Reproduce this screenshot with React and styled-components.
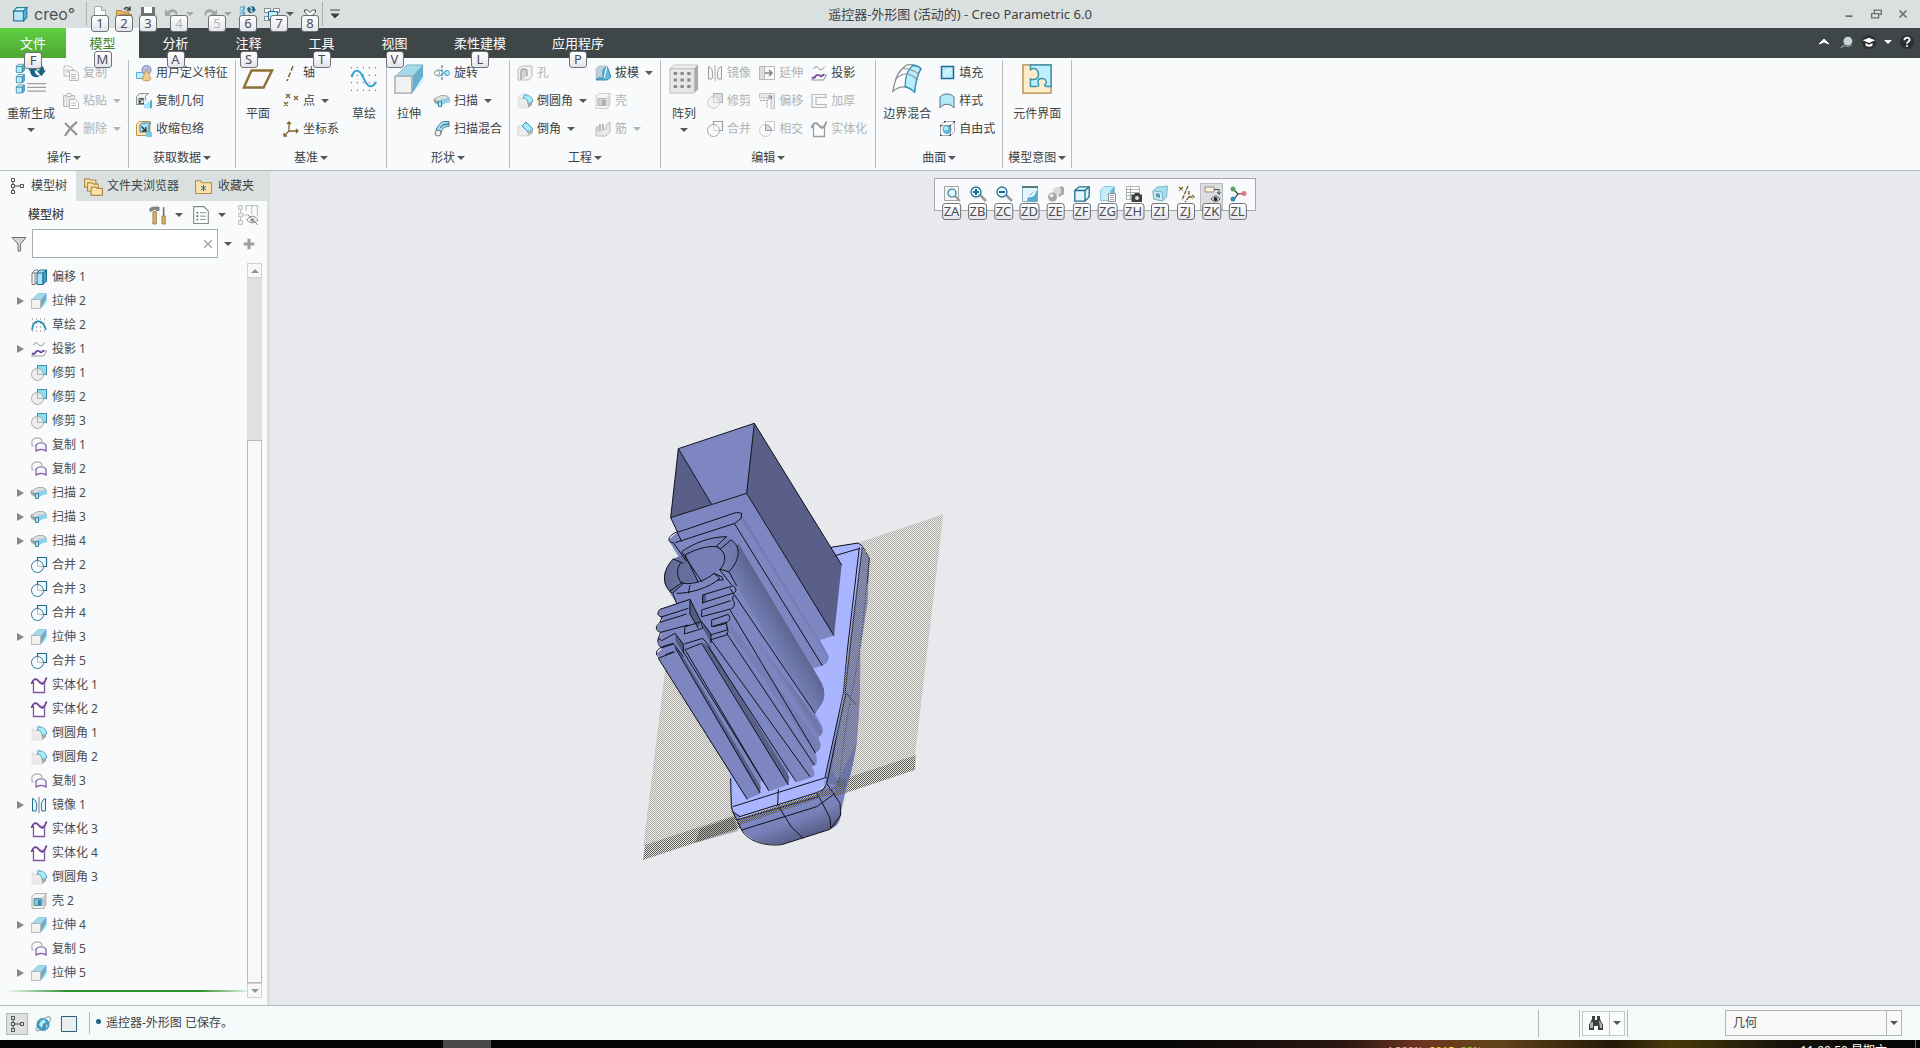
import React from "react";
import styled, { createGlobalStyle } from "styled-components";

const GlobalStyle = createGlobalStyle`
  * {
    box-sizing: border-box;
  }
  body {
    margin: 0;
    overflow: hidden;
    color: #404344;
    font-family: "Noto Sans", "Noto Sans CJK SC", sans-serif;
    font-size: 12px;
    line-height: 16px;
  }
  button, input, select {
    margin: 0;
    padding: 0;
    border: 0;
    background: none;
    color: inherit;
    font: inherit;
  }
`;

const Window = styled.div`
  display: flex;
  flex-direction: column;
  height: 100vh;
  background: #f8fafc;
`;

const Svg = styled.svg`
  display: block;
  flex: none;
  overflow: visible;
  width: ${({ $size }) => $size || 16}px;
  height: ${({ $size }) => $size || 16}px;
`;

const Arrow = styled.span`
  flex: none;
  width: 0;
  height: 0;
  border: 4px solid transparent;
  border-top-color: ${({ $color }) => $color || "#555859"};
  border-bottom: 0;
`;

const KeyTip = styled.span`
  position: absolute;
  z-index: 5;
  left: 50%;
  bottom: ${({ $drop }) => $drop || -6}px;
  transform: translateX(-50%);
  min-width: 18px;
  height: 17px;
  padding: 0 1px;
  border: 1px solid #6f7273;
  border-radius: 3px;
  background: linear-gradient(#ffffff, #e4e4ee);
  color: ${({ $off }) => ($off ? "#b4b4b8" : "#4c4c50")};
  font-size: 13px;
  line-height: 15px;
  text-align: center;
`;

/* title bar */

const TitleBar = styled.header`
  display: grid;
  grid-template-columns: 1fr auto 1fr;
  align-items: center;
  height: 28px;
  background: #dae0df;
`;

const Quick = styled.div`
  display: flex;
  align-items: center;
  height: 28px;
`;

const Brand = styled.div`
  display: flex;
  align-items: center;
  gap: 6px;
  width: 87px;
  height: 24px;
  margin-right: 1px;
  padding-left: 12px;
  border-right: 1px solid #aab2b2;
  color: #4a5051;
  font-family: Inter, sans-serif;
  font-size: 16px;
`;

const QuickButton = styled.button`
  position: relative;
  display: flex;
  align-items: center;
  justify-content: center;
  gap: 6px;
  width: ${({ $wide }) => ($wide ? 38 : 24)}px;
  height: 24px;
`;

const Customize = styled(QuickButton)`
  border-left: 1px solid #aab2b2;
`;

const Title = styled.h1`
  margin: 0;
  font-size: 13px;
  font-weight: 400;
  line-height: 20px;
`;

const WindowButtons = styled.div`
  display: flex;
  justify-content: flex-end;
  padding-right: 4px;
  color: #6b6f70;
`;

const WindowButton = styled.button`
  display: flex;
  justify-content: center;
  width: 27px;
`;

/* tabs */

const TabBar = styled.nav`
  display: flex;
  height: 30px;
  background: #3e4647;
  color: #fff;
`;

const Tab = styled.button`
  position: relative;
  min-width: 73px;
  padding: 0 23px;
  font-size: 13px;
  ${({ $active }) => $active && "background: #f8fafc; color: #41852f;"}
`;

const FileTab = styled(Tab)`
  min-width: 66px;
  padding: 0 20px;
  background: linear-gradient(#5fd03f, #4fa536);
`;

const TabTools = styled.div`
  display: flex;
  align-items: center;
  gap: 8px;
  margin-left: auto;
  padding: 0 6px 3px 0;
`;

const TabTool = styled.button`
  display: flex;
`;

/* ribbon */

const Ribbon = styled.section`
  display: flex;
  height: 113px;
  padding: 2px 0;
  border-bottom: 1px solid #b3bbbb;
`;

const Group = styled.div`
  display: flex;
  flex-direction: column;
  align-items: center;
  padding: 0 ${({ $pad }) => $pad || 7}px;
  border-right: 1px solid #b8bebf;
`;

const GroupBody = styled.div`
  display: flex;
  gap: ${({ $gap }) => $gap || 8}px;
  height: 89px;
`;

const GroupLabel = styled.button`
  display: flex;
  align-items: center;
  gap: 2px;
  height: 18px;
  white-space: nowrap;
`;

const BigButton = styled.button`
  display: flex;
  flex-direction: column;
  align-items: center;
  min-width: 30px;
  padding-top: 4px;
  white-space: nowrap;
  span:first-of-type {
    margin: 12px 0 6px;
  }
`;

const Column = styled.div`
  display: flex;
  flex-direction: column;
`;

const SmallButton = styled.button`
  display: flex;
  align-items: center;
  height: 28px;
  padding-bottom: 3px;
  white-space: nowrap;
  color: ${({ disabled }) => (disabled ? "#b1b4b5" : "inherit")};
  svg {
    margin-right: 4px;
    ${({ disabled }) => disabled && "filter: grayscale(1); opacity: 0.6;"}
  }
  ${Arrow} {
    margin-left: 6px;
  }
`;

/* work area */

const Work = styled.main`
  display: flex;
  flex: 1;
  min-height: 0;
`;

const Side = styled.aside`
  display: flex;
  flex-direction: column;
  width: 270px;
  border-right: 3px solid #dae0df;
`;

const SideTabs = styled.div`
  display: flex;
  height: 30px;
  margin-right: -3px;
  background: #dae0df;
`;

const SideTab = styled.button`
  display: flex;
  align-items: center;
  gap: ${({ $gap }) => $gap || 6}px;
  padding: 0 ${({ $pad }) => $pad || 8}px;
  white-space: nowrap;
  ${({ $active }) => $active && "background: #f8fafc;"}
`;

const TreeHead = styled.div`
  display: flex;
  align-items: center;
  height: 28px;
  padding: 0 9px 0 28px;
  h2 {
    flex: 1;
    margin: 0;
    font-size: 12px;
    font-weight: 500;
  }
`;

const HeadButton = styled.button`
  display: flex;
  align-items: center;
  gap: 8px;
  margin-left: 9px;
  &:last-child {
    margin-left: 12px;
  }
`;

const Filter = styled.div`
  display: flex;
  align-items: center;
  padding: 0 11px;
  gap: 6px;
  > svg {
    margin-right: -1px;
  }
`;

const SearchBox = styled.div`
  display: flex;
  flex: 1;
  align-items: center;
  min-width: 0;
  height: 29px;
  padding-right: 3px;
  border: 1px solid #a3b0b3;
  background: #fff;
  input {
    flex: 1;
    width: 0;
    min-width: 0;
    height: 100%;
    padding-left: 6px;
    outline: 0;
  }
`;

const PlainButton = styled.button`
  display: flex;
  align-items: center;
`;

const AddButton = styled(PlainButton)`
  margin-left: 4px;
`;

const TreeArea = styled.div`
  display: flex;
  flex: 1;
  min-height: 0;
  margin: 5px 5px 7px 8px;
`;

const TreePane = styled.div`
  flex: 1;
  overflow: hidden;
  padding-top: 2px;
`;

const Tree = styled.ul`
  margin: 0 0 5px;
  padding: 0;
  list-style: none;
`;

const TreeItem = styled.li`
  display: flex;
  align-items: center;
  height: 24px;
  padding-left: 9px;
  color: #4b4d4f;
  svg {
    margin-right: 5px;
  }
`;

const Twist = styled.button`
  width: 7px;
  height: 8px;
  margin-right: 7px;
  border: 4px solid transparent;
  border-left: 7px solid ${({ $open }) => ($open ? "#858788" : "transparent")};
  border-right: 0;
`;

const InsertLine = styled.div`
  height: 2px;
  background: linear-gradient(90deg, #eef5ee, #2c8f2c 25%, #2c8f2c 80%, #dff0df);
`;

const ScrollBar = styled.div`
  display: flex;
  flex-direction: column;
  width: 15px;
  background: #dfe0e2;
`;

const ScrollButton = styled.button`
  display: flex;
  align-items: center;
  justify-content: center;
  height: 15px;
  border: 1px solid #cfd1d3;
  background: #f8f8f9;
  ${Arrow} {
    border-top-color: #929495;
    transform: ${({ $up }) => ($up ? "rotate(180deg)" : "none")};
  }
`;

const Track = styled.div`
  display: flex;
  flex: 1;
  flex-direction: column;
  justify-content: flex-end;
`;

const Thumb = styled.div`
  height: 77%;
  border: 1px solid #b9bbbd;
  background: #f8f8f9;
`;

const Canvas = styled.section`
  position: relative;
  flex: 1;
  background: #e8e9ed;
`;

const Scene = styled.svg`
  display: block;
  width: 100%;
  height: 100%;
`;

const ViewBar = styled.div`
  position: absolute;
  top: 7px;
  left: 50%;
  transform: translateX(-50%);
  display: flex;
  height: 33px;
  padding: 0 4px;
  border: 1px solid #a5a8aa;
  background: #f8fafc;
`;

const ViewButton = styled.button`
  position: relative;
  display: flex;
  align-items: flex-start;
  justify-content: center;
  width: 23px;
  height: 27px;
  margin: 4px 2px 0 1px;
  padding-top: 3px;
  outline: ${({ $on }) => ($on ? "1px solid #bdbec0" : "0")};
  outline-offset: -1px;
  background: ${({ $on }) => ($on ? "#dcdde0" : "none")};
`;

/* bottom */

const Status = styled.footer`
  display: flex;
  align-items: center;
  height: 35px;
  padding-left: 2px;
  border-top: 1px solid #b3bbbb;
  background: #f5f9fa;
`;

const StatusButton = styled.button`
  display: flex;
  align-items: center;
  justify-content: center;
  width: 22px;
  height: 22px;
  margin: 2px 0 0 4px;
  border: 1px solid ${({ $on }) => ($on ? "#b4b6b8" : "transparent")};
  background: ${({ $on }) => ($on ? "#dfe0e2" : "none")};
`;

const Message = styled.p`
  flex: 1;
  margin: 0 0 0 9px;
  padding-left: 6px;
  border-left: 1px solid #b3b8b9;
  line-height: 22px;
  &::before {
    content: "";
    display: inline-block;
    width: 5px;
    height: 5px;
    margin-right: 5px;
    border-radius: 50%;
    background: #1b6283;
    vertical-align: 3px;
  }
`;

const StatusCell = styled.div`
  display: flex;
  align-items: center;
  height: 27px;
  padding: 0 2px;
  border-left: 1px solid #b3b8b9;
  ${({ $empty }) => $empty && "width: 41px;"}
`;

const FindButton = styled.button`
  display: flex;
  align-items: center;
  justify-content: center;
  width: ${({ $narrow }) => ($narrow ? 16 : 28)}px;
  height: 25px;
  margin-left: ${({ $narrow }) => ($narrow ? -1 : 0)}px;
  border: 1px solid #c3c8ca;
  background: #fafbfc;
`;

const SelectWrap = styled.label`
  display: flex;
  align-items: center;
  width: 177px;
  height: 26px;
  margin: 0 18px 0 93px;
  border: 1px solid #b0b4b5;
  background: #f8f8f8;
  select {
    flex: 1;
    height: 24px;
    padding-left: 7px;
    border-right: 1px solid #b0b4b5;
    outline: 0;
    appearance: none;
  }
  ${Arrow} {
    margin: 0 3px;
  }
`;

const TaskBar = styled.div`
  display: flex;
  height: 8px;
  overflow: hidden;
  background: linear-gradient(90deg, #050505 60%, #2a1712 70%, #6d3520 74%, #63441a 78%, #221808 84%, #4a3a0a 87%, #14120a 93%, #050505);
  color: #fff;
  font-size: 12px;
  line-height: 16px;
`;

const TaskSlot = styled.span`
  width: 48px;
  margin-left: 443px;
  background: #48494a;
`;

const Meters = styled.div`
  display: flex;
  flex: 1;
  gap: 6px;
  padding: 3px 0 0 895px;
  font-size: 11px;
`;

const Meter = styled.span`
  color: ${({ $color }) => $color};
`;

const Clock = styled.time`
  padding-top: 3px;
  margin-right: 28px;
`;

const ShowDesktop = styled.span`
  width: 5px;
  border-left: 1px solid #666;
`;

/* icons, drawn on a 16 unit grid */

const B = "#1f6e92";
const G = "#8d9091";

const cube = (x, y, s) => (
  <g transform={`translate(${x} ${y}) scale(${s})`} stroke="#287fa2" strokeWidth={1.1}>
    <path d="M1 4h9v9H1z" fill="#b8e9fb" />
    <path d="M1 4l3-3h9l-3 3z" fill="#e4f7fe" />
    <path d="M10 4l3-3v9l-3 3z" fill="#5eb2d3" />
  </g>
);

const extrude = (
  <>
    <path d="M.5 7L7 .5h8.5L10 6.5z" fill="#a4d9ec" stroke="#78aec3" strokeWidth=".5" />
    <path d="M10 6.5L15.500.5v9L9.500 15.5z" fill="#66b0cf" />
    <path d="M10 15.500l5.500-6v-3z" fill="#d9f2fa" />
    <path d="M.5 6.500h9v9h-9z" fill="#f1f1f0" stroke="#a2a5a6" strokeWidth=".7" />
  </>
);

const tree = (
  <g fill="none" stroke="#4c4f50">
    <path d="M2.500.5h3v3h-3zM2.500 6.500h3v3h-3zM2.500 12.500h3v3h-3zM11.500 6.500h3v3h-3zM4 3.500v3M4 9.500v3M5.500 8h6" />
  </g>
);

const regen = (
  <>
    {cube(-0.2, -0.2, 0.36)}
    {cube(-0.2, 5.3, 0.36)}
    {cube(-0.2, 10.8, 0.36)}
    <path d="M6 10.500h10M6 12.500h10M6 14.500h10" stroke="#9b9d9e" strokeWidth=".7" />
    <path d="M6.500 3.500L9 .5l2.500 3H10c0 2 1.500 3 3 2.500-2 2-5.500 1-5.500-2.500zM16 3.500l-2.500 3-2.500-3h1.500c0-2-1-2.500-2.500-2.500 2-1.500 5-.5 5 2.500z" fill="#1c6485" />
  </>
);

const icons = {
  cube: cube(0.5, 0.5, 1.1),
  regen,
  extrude,
  tree,
  new: <><path d="M2.500.5h7l4 4v11h-11z" fill="#fff" stroke="#a3a6a7" /><path d="M9.500.5v4h4" fill="#e6e6e6" stroke="#a3a6a7" /></>,
  open: <><path d="M.5 14V4.500h5l1 1.500H13v3" fill="#e6b56b" stroke="#b98538" /><path d="M1 14.500L3.500 8.500H16l-3 6z" fill="#ffe1a8" stroke="#b98538" /><path d="M8 3.500c2-3 4-2 5-.5M14 .5V4h-3.500" fill="none" stroke="#444" strokeWidth="1.500" /></>,
  save: <><path d="M1 1h14v14H1z" fill="#707476" /><path d="M4 1h8v6H4z" fill="#fff" /><path d="M4 10h8v5H4z" fill="#ccc" /></>,
  undo: <path d="M1 3v7h7L5.500 7.500C8 5 13 6 12 12c4-6-1-12-9-6.500z" fill="#a2a7a7" />,
  redo: <path d="M15 3v7H8l2.500-2.500C8 5 3 6 4 12c-4-6 1-12 9-6.500z" fill="#a2a7a7" />,
  windows: <g stroke="#858889"><path d="M.5 2.500h6v4h-6zM9.500 2.500h6v4h-6zM.5 10.500h6v4h-6z" fill="#fff" /><path d="M4.500 5.500h9v8h-9z" fill="#c5effc" stroke={B} /></g>,
  close: <path d="M2.500 4h3L8 6.500 10.500 4h3v2L11 8.500l2.500 2.500v2h-3L8 10.500 5.500 13h-3v-2L5 8.500 2.500 6z" fill="#fff" stroke="#4c4f50" />,
  custom: <path d="M3 4h10M4 8h8l-4 4z" fill="#444" stroke="#444" />,
  min: <path d="M4 10.500h8" stroke="currentColor" strokeWidth="2" />,
  restore: <path d="M6 7V3.500h8v5h-3M3 7.500h8v5H3z" fill="none" stroke="currentColor" strokeWidth="1.500" />,
  x: <path d="M4 4l8 8M12 4l-8 8" stroke="currentColor" strokeWidth="2" />,
  up: <path d="M3 10l5-5 5 5-5-2z" fill="#fff" stroke="#fff" />,
  search: <><circle cx="9" cy="7" r="5" fill="#ccd5d5" /><path d="M5 11l-4 4" stroke="#9aa5a5" strokeWidth="1.500" /><path d="M4 12.500c3 1 7 1 10-1" fill="none" stroke="#999" /></>,
  cap: <><circle cx="8" cy="8" r="8" fill="#2d2f30" /><path d="M1 6l7-3 7 3-7 3zM4 9v3c3 2 6 2 8 0V9L8 11z" fill="#fff" /></>,
  help: <><circle cx="8" cy="8" r="8" fill="#2d2f30" /><path d="M5 6c0-4 7-4 6 0-1 2-3 1.500-3 4M8 11.500v2" fill="none" stroke="#fff" strokeWidth="2" /></>,
  copy: <g fill="#f5f5f5" stroke={G}><path d="M1 1h6l3 3v7H1z" /><path d="M6.500 5.500h6l3 3v7h-9z" /><path d="M8 9.500h5M8 11.500h5M8 13.500h5M3 5h3M3 7h3" /></g>,
  paste: <g stroke={G}><path d="M.5 2.500h11v11H.5z" fill="#d4d4d4" /><path d="M4 .5h4v3H4z" fill="#fff" /><path d="M6.500 6.500h6l3 3v6h-9zM8 10h5M8 12.500h5" fill="#fff" /></g>,
  delete: <path d="M2 2l12 12M14 1C10 4 5 10 2 15" fill="none" stroke="#555" strokeWidth="2.200" />,
  udf: <><path d="M.5 7.500h10v6H.5z" fill="#bdeeff" stroke="#5db1d0" /><circle cx="10.500" cy="5" r="4.500" fill="#b4bde8" stroke="#7882bb" /><path d="M10.500 4.500L6 14c2 2.500 7 2.500 9 0z" fill="#f2cd8f" stroke="#ba8d43" strokeWidth=".8" /></>,
  copyGeo: <><path d="M.5 3.500L3.500.5h9L9.500 3.500v8H.5z" fill="#eee" stroke={G} /><path d="M2.500 5h5.500v6H2.500z" fill="#505558" /><path d="M3.500 6l3 3M7 6.500V9.500H4.500" fill="none" stroke="#fff" /><path d="M8 8.500h7.500v7H8z" fill="#a8e7fb" /><path d="M8 11V8.500l3-2.500H16v2.500H11V11z" fill="#e2f8ff" /><path d="M14 8.500l2-2v8l-2 1z" fill="#46add2" /></>,
  shrink: <><path d="M.5 3.500L3 .5h11v14H.5z" fill="#ffe2ad" stroke="#c0964f" /><path d="M4 4l2-2h9l-2 2v7H4z" fill="#9ee0f5" stroke={B} strokeWidth=".8" /><path d="M5.500 5.500l4 4M10 6v4H6" fill="none" stroke="#333" strokeWidth="1.300" /><path d="M10 11h6v5h-6z" fill="#77c8e4" /></>,
  plane: <path d="M4.500 3.500h11L11 12.500H.5z" fill="#fbfaf8" stroke="#8f6f36" strokeWidth="1.300" />,
  axis: <path d="M10 1L4 16" stroke="#82642c" strokeWidth="1.500" strokeDasharray="5 2" />,
  points: <path d="M3 1l4 4M7 1L3 5M11 3l4 4M15 3l-4 4M1 9l4 4M5 9l-4 4" stroke="#82642c" strokeWidth="1.400" />,
  csys: <path d="M6 1v9h9M6 10l-5 5M4 3l2-2 2 2M13 8l2 2-2 2M1 12v3h3" fill="none" stroke="#82642c" strokeWidth="1.300" />,
  sketch: <><path d="M1 2h14M1 6h14M1 10h14M1 14h14" stroke="#555" strokeWidth=".6" strokeDasharray=".6 2.600" /><path d="M1.500 7c1-4.500 4-4.500 6 0s4 7 7 2.500" fill="none" stroke="#36a7d6" strokeWidth="1.100" /></>,
  revolve: <><path d="M8 0v16" stroke="#555" strokeDasharray="3 1" /><circle cx="3" cy="8" r="2.500" fill="#fff" stroke={G} /><circle cx="13" cy="8" r="2.500" fill="#bceafa" stroke="#36a7d6" /><path d="M3 5.500c4-3 7 5 10 5M3 10.500c4 3 7-5 10-5" fill="none" stroke="#36a7d6" /></>,
  sweep: <><path d="M0 6l7-3.500h5L15.500 5 11 6.500 7 7l-2 2-5-1z" fill="#dcdfe0" stroke={G} strokeWidth=".7" /><path d="M0 6v3.500l4 2.500V8z" fill="#9da3a3" /><path d="M5 8.500C8 6 11 6.500 16 5.500v4c-4 0-6 1-8 3z" fill="#8fd2ea" /><path d="M4.500 8.500h3v5h-3z" fill="#a0e5fb" stroke={B} strokeWidth=".8" /></>,
  sweepBlend: <><path d="M2 9C4 4 7 1 10 .5h5v5c-6 0-7 3-8 7z" fill="#9fdcf1" stroke="#4b8299" /><path d="M6 7c2-3 5-4 9-4" fill="none" stroke="#315e70" /><circle cx="4" cy="12" r="3" fill="#eee" stroke="#777" /></>,
  hole: <><path d="M1 4l4-3h10v10l-3 4H1z" fill="#eee" stroke={G} /><path d="M4 15V7c0-4 6-4 6 0v4" fill="#bbb" stroke="#777" strokeWidth="1.500" /></>,
  round: <><path d="M1 5h5c4 0 5 4 5 6v4H1z" fill="#ececec" stroke="#d0d0d0" strokeWidth=".5" /><path d="M1 5l4-4h4L7 5z" fill="#fff" stroke="#bbb" strokeWidth=".5" /><path d="M7 2h3c4 1 6 4 5.500 7L11 11c0-4-2-6-5-6z" fill="#a8e9fc" stroke="#3b95b8" strokeWidth=".8" /><path d="M11 11l4-3v4l-4 3z" fill="#a5a9aa" /></>,
  chamfer: <><path d="M1 5h4l6 6v4H1z" fill="#ececec" stroke="#bbb" strokeWidth=".5" /><path d="M5 5l4-4 7 7-5 3z" fill="#a8e9fc" stroke="#2e94b8" /><path d="M11 11l5-3v4l-5 3z" fill="#b5b9ba" /></>,
  draft: <><path d="M1 4l3-3h7L9 4v10H1z" fill="#b5d3df" stroke="#97acb4" strokeWidth=".6" /><path d="M8 13V5l4-4 4 11-4 3H1l2-2z" fill="#64bddc" stroke={B} strokeWidth=".8" /><path d="M12 1l-3 12" stroke="#fff" /></>,
  shell: <><path d="M1 3.500L4 .5h11.500L13 3.500v12H1z" fill="#f3f3f3" stroke={G} strokeWidth=".7" /><path d="M13 4l2.500-3v11L13 15z" fill="#bcc1c2" /><path d="M3 5.500h8v7H3z" fill="#83c1da" stroke="#558da4" /><path d="M7 7h3v5H7z" fill="#378bb0" /></>,
  rib: <><path d="M1 15V7l2-2v5l8-2V4l4-3v10l-4 4z" fill="#ddd" stroke={G} /><path d="M5 3v6M8 3v5" stroke={G} strokeWidth="2" /></>,
  pattern: <><path d="M.5 2.500l2-2h13l-2 2z" fill="#eee" stroke="#c2c2c2" strokeWidth=".5" /><path d="M13.500 2.500l2-2v13l-2 2z" fill="#aaa" /><path d="M.5 2.500h13v13H.5z" fill="#e6e6e6" stroke="#bdbdbd" strokeWidth=".5" />{[4, 7.5, 11].map((y) => <path key={y} d={`M2.500 ${y + 1}h9`} stroke="#8a8a8a" strokeWidth="1.600" strokeDasharray="1.800 1.800" />)}</>,
  mirror: <><path d="M1.500 1.500c4 1 5 7 3.500 12.500H1.500zM14.500 1.500c-4 1-5 7-3.500 12.500h3.500z" fill="#e6f8fd" stroke={B} /><path d="M8 0v16" stroke="#777" /></>,
  trim: <><path d="M6.500.5h9v9h-9z" fill="#8fdcf7" stroke={B} strokeWidth=".8" /><circle cx="6.500" cy="9.500" r="6" fill="#ececec" fillOpacity=".9" stroke="#a7a9aa" /><path d="M6.500 4v5.500H12" fill="none" stroke="#9eb6bf" /></>,
  merge: <><path d="M6.500 4V.5h9v9H12" fill="none" stroke={B} strokeWidth="1.200" /><circle cx="6.500" cy="9.500" r="6" fill="#fafcfd" stroke="#2d7898" /><path d="M6.500 4v5.500H12" fill="none" stroke="#a1bfca" /></>,
  intersect: <><path d="M6.500.5h9v9h-9z" fill="#fff" stroke="#aaa" /><circle cx="6.500" cy="9.500" r="6" fill="none" stroke="#aaa" /><path d="M6.500 4c3 0 6 3 6 5.500h-6z" fill="#ccc" stroke="#555" /></>,
  extend: <><path d="M.5 1.500h5v13h-5z" fill="#ccc" /><path d="M.5 1.500h15v13H.5zM5.500 1.500v13" fill="none" stroke={G} /><path d="M6 8h7M10 5l3 3-3 3" fill="none" stroke="#333" strokeWidth="1.500" /></>,
  offset: <><path d="M.5.5h15v15H12V5H.5z" fill="#ddd" stroke={G} strokeWidth=".8" /><path d="M1 7.500h7v8" fill="none" stroke="#555" strokeDasharray="2 1" /><path d="M8 7.500l4-4M9 3h3.500v3.500" fill="none" stroke="#333" /></>,
  thicken: <path d="M1 1.500h14v3H5v7h10v3H1z" fill="#f5f5f5" stroke={G} strokeWidth="1.200" />,
  solidify: <><path d="M2.500 5v10.500h11V4" fill="#fff" stroke="#7a549c" strokeWidth="1.300" /><path d="M7 4h7l-2 4-3-1z" fill="#cbbde0" /><path d="M.5 7c1-4 4-7 7-3s5 5 8-3.500" fill="none" stroke="#6d4196" strokeWidth="1.800" /></>,
  project: <><path d="M3 4c1-4 4-2 5 0s4 0 6-2.500" fill="none" stroke="#87898a" /><path d="M.5 15l4-5h11l-3 5z" fill="#fff" stroke={G} /><path d="M1 12c2 2 3 1 4-1s3-1 4 0 3 0 4-2" fill="none" stroke="#6b36a2" strokeWidth="1.500" /></>,
  boundary: <><path d="M.5 14.500C2 6 4 3 8 .5c3-.5 6 .5 7.500 2-2 3-3 8-3.500 12.500-3-3-7-4-11.500-.5z" fill="#fff" stroke={G} strokeWidth=".7" /><path d="M11 .8c2 0 3.500.7 4.500 1.700-2 3-3 8-3.500 12.500-1.500-1.500-3-2.500-5-3C7 7 8 3 11 .8z" fill="#b8edfd" stroke="#3292b7" strokeWidth=".7" /><path d="M2 8c4-4 8-3 11 0M6 2.500c3 0 6 1 8.500 3" fill="none" stroke={G} strokeWidth=".6" /></>,
  fill: <><path d="M2.500 1.500h12v12h-12z" fill="#b2ebfc" stroke={B} strokeWidth="1.500" /><path d="M4 10l6-7M5 12l8-9M9 12l4-5" stroke="#fff" /></>,
  style: <path d="M1 4c3-4 11-4 14 0v11c-3-5-11-5-14 0z" fill="#b5e9fa" stroke="#527482" />,
  freestyle: <><circle cx="8" cy="8.500" r="4.500" fill="#5ab7db" /><circle cx="7" cy="7.500" r="2.200" fill="#aee3f6" /><path d="M1.500 4.500h10v10h-10zM1.500 4.500l4-4h10v10l-4 4M11.500 4.500l4-4" fill="none" stroke="#777" strokeWidth=".6" /><path d="M1 4h1.500v1.500H1zM10.500 4H12v1.500h-1.500zM1 13.500h1.500V15H1zM10.500 13.500H12V15h-1.500zM14.500 0H16v1.500h-1.500zM5 0h1.500v1.500H5z" fill="#333" /></>,
  component: <><path d="M.5.5h15v15H.5z" fill="#ffedca" stroke="#b28544" strokeWidth=".7" /><path d="M4.500.5h11V12h-2.500c-2-.5-.5-1 0-2 0-3-5-3-4.500 0 .5 1 1 2-1 2h-3V8c3 1 5-.5 4-4-1-2-2.500-2-4-1z" fill="#bfeffd" stroke="#3a93b2" strokeWidth=".8" /></>,
  offsetTree: <><path d="M1 4l3-3h3v11l-3 3.500H1zM4 4v11M1 4h5" fill="none" stroke="#777" /><path d="M6 4h6v11.500H6zM6 4l3-3h6.500l-3.500 3" fill="#a9e2f6" stroke={B} /><path d="M12 4l3.500-3v11L12 15.500z" fill="#3ba0c6" stroke={B} /></>,
  sketchTree: <><path d="M1 2h15M1 6h15M1 10h15M1 14h15" stroke="#777" strokeDasharray="1 3" /><path d="M1 13C2 3 11 0 15 13" fill="none" stroke="#2488b2" strokeWidth="1.600" /></>,
  copyTree: <><path d="M3 9H1V4c2-4 8-4 10-.5V5" fill="none" stroke="#b0b2b3" strokeWidth="1.200" /><path d="M5 14V8c2-3 8-3 10 0v6c-3-2-7-2-10 0z" fill="#f8f7fb" stroke="#7a549c" strokeWidth="1.200" /></>,
  folders: <g fill="#fde1ad" stroke="#b48d4a"><path d="M.5 1.500h4l1 1H10v6H.5z" /><path d="M3 5h4l1 1h4v6H3z" /><path d="M6 8.500h4l1 1h4.500v6H6z" /></g>,
  favorite: <><path d="M.5 2.500h5l1 2h9v10H.5z" fill="#fde1ad" stroke="#b48d4a" /><path d="M8 6.500v6M5.500 7.500l5 4M10.500 7.500l-5 4" stroke={B} strokeWidth=".9" /></>,
  tools: <><path d="M.5 2.500C3 0 7 1 9 1v3H7L5 3 1 5z" fill="#85898a" stroke="#666" strokeWidth=".5" /><path d="M3.500 5h3v11h-3z" fill="#deb36a" stroke="#92703a" strokeWidth=".7" /><path d="M13 1v8" stroke="#777" strokeWidth="1.500" /><path d="M11.500 9h3v7h-3z" fill="#deb36a" stroke="#92703a" strokeWidth=".7" /></>,
  list: <><path d="M1.500.5h9l4 4v11h-13z" fill="#fff" stroke="#858889" /><path d="M4 6h1.500M4 9h1.500M4 12h1.500" stroke={B} strokeWidth="1.500" /><path d="M7 6h5.500M7 9h5.500M7 12h5.500" stroke="#888" strokeWidth=".8" /></>,
  hideTree: <g fill="none" stroke="#b9bbbc" strokeWidth=".8"><path d="M.5.5h3v3h-3zM.5 6.500h3v3h-3zM.5 12.500h3v3h-3zM2 3.500v3M2 9.500v3M3.500 8h5M6 .5h10M6.500.5v4M11 .5v7M15.500.5v8" /><path d="M7 12c3-4 6-4 9 0-3 3-6 3-9 0zM8 8l8 8" stroke="#858889" /><circle cx="11.500" cy="12" r="1.500" fill="#858889" /></g>,
  funnel: <path d="M1 1.500h14L9.500 8v7H7V8z" fill="#d5d7d8" stroke="#6c6f70" />,
  clear: <path d="M3 3l10 10M13 3L3 13" stroke="#a0a2a3" strokeWidth="1.800" />,
  plus: <path d="M8 2v12M2 8h12" stroke="#9b9d9e" strokeWidth="3.500" />,
  globe: <><circle cx="8" cy="8.500" r="6.500" fill="#359cc5" /><path d="M5 5l4-2 2 3-3 2-1 4-3-3zM11 8l2 1-2 4z" fill="#bdeafa" /><path d="M2 15C-2 13 9-1 15 1c3 3-6 13-13 14z" fill="none" stroke="#707879" strokeWidth=".8" /></>,
  square: <path d="M.5.5h15v15H.5z" fill="#e9eef1" stroke="#29647e" />,
  binoculars: <><path d="M4 1h3v4h2V1h3v3l3 6v5h-5v-4H6v4H1v-5l3-6z" fill="#3d4041" /><path d="M3 7h2v6H2v-3zM11 6h1l2 4v3h-2z" fill="#aeb1b2" /></>,
  zoomFit: <><path d="M.5.500h14v14H.5z" fill="#f3f4f4" stroke={G} strokeWidth=".8" /><path d="M11 10l5 5" stroke="#999" strokeWidth="2" /><circle cx="8" cy="7" r="4" fill="#dff6fd" stroke="#29799b" strokeWidth="1.200" /></>,
  zoomIn: <><path d="M10 9l6 6" stroke="#999" strokeWidth="2.500" /><circle cx="6" cy="6" r="5" fill="#dff6fd" stroke="#29799b" strokeWidth="1.300" /><path d="M3 6h6M6 3v6" stroke="#1f6a8b" strokeWidth="2" /></>,
  zoomOut: <><path d="M10 9l6 6" stroke="#999" strokeWidth="2.500" /><circle cx="6" cy="6" r="5" fill="#dff6fd" stroke="#29799b" strokeWidth="1.300" /><path d="M3 6h6" stroke="#1f6a8b" strokeWidth="2" /></>,
  repaint: <><path d="M.5.5h15v15H.5z" fill="#e2f5fb" stroke="#8ab0bd" /><path d="M5 15.500c0-5 4-9 10.500-11v11z" fill="#58acd0" /><path d="M4 11c3-1 5-1 7-4l3-3c0 5-4 8-7 7z" fill="#fff" /><path d="M0 1h16" stroke="#557784" strokeWidth="2" /></>,
  shading: <><path d="M8 3l6-3 2 2v6l-5 3z" fill="#a4a6a7" /><circle cx="9" cy="5" r="4" fill="#d9dada" /><circle cx="4.500" cy="11" r="4.500" fill="#a3a5a6" /><circle cx="3.500" cy="9.500" r="2" fill="#e7e7e7" /></>,
  view: <><path d="M.8 4.500L5 .8h10.200v10L11 15.200H.8z" fill="#e5f6fb" stroke={B} strokeWidth="1.300" /><path d="M.8 4.500H11v10.700M11 4.500L15.200.8" fill="none" stroke={B} strokeWidth="1.300" /></>,
  savedView: <><path d="M.5 4L4 .5h10v10l-4 4H.5z" fill="#c4ecf8" stroke="#91c5d5" /><path d="M10.500 4.500l4-4v8l-4 4z" fill="#69b5d2" /><path d="M8.500 7.500h7v8h-7z" fill="#f8f8f8" stroke="#777" strokeWidth=".8" /><path d="M10 9.500h4M10 11.500h4M10 13.500h4" stroke="#888" strokeWidth=".7" /></>,
  viewMgr: <><path d="M.5.5h13v13H.5zM.5 3.500h13M.5 6.500h13M.5 9.500h13M4.500.5v13" fill="#fff" stroke="#9b9e9f" strokeWidth=".8" /><path d="M5.500 8.500H8l1-1.500h4l1 1.500h2V16H5.500z" fill="#3d4041" /><circle cx="11" cy="12" r="2" fill="#ddd" /></>,
  section: <><path d="M1 5l4-4 10.500-1-1 11-4 4-9-2z" fill="#a8dbec" stroke="#6ba9bf" strokeWidth=".8" /><path d="M1 5l9 1 1 9-9-2z" fill="#d3eef6" stroke="#6ba9bf" strokeWidth=".8" /><path d="M4 7l4 1v4l-4-1z" fill="#559fbb" /></>,
  datum: <path d="M1 1l4 4M5 1L1 5M10 0L4 14M11 5v6h5M11 11l-4 5M14 9l2 2-2 2" fill="none" stroke="#82642c" strokeWidth="1.400" strokeDasharray="4 1" />,
  annotation: <><path d="M1 1h9v5H1z" fill="#fff2d7" stroke={G} /><path d="M10 3.500h5V8M13 6l2 2.500 1.500-2.500" fill="none" stroke="#4c4f50" /><path d="M7 13c3-4 6-4 9 0-3 3-6 3-9 0z" fill="#eee" stroke="#4c4f50" /><circle cx="11.500" cy="13" r="2" fill="#222" /></>,
  spin: <><path d="M3 3l5 5 6-.5M8 8l-4 5" fill="none" stroke="#333" strokeWidth="1.200" /><circle cx="3" cy="3" r="2.500" fill="#5ba06c" /><circle cx="14" cy="7.500" r="2.500" fill="#de7c7b" /><circle cx="3" cy="13" r="2.500" fill="#3b8bae" /></>,
};

function Icon({ name, size }) {
  return (
    <Svg viewBox="0 0 16 16" $size={size} aria-hidden="true">
      {icons[name]}
    </Svg>
  );
}

/* data */

const quick = [
  ["new", "1"],
  ["open", "2"],
  ["save", "3"],
  ["undo", "4", true, true],
  ["redo", "5", true, true],
  ["regen", "6"],
  ["windows", "7", true],
  ["close", "8"],
];

const tabs = [
  ["模型", "M"],
  ["分析", "A"],
  ["注释", "S"],
  ["工具", "T"],
  ["视图", "V"],
  ["柔性建模", "L"],
  ["应用程序", "P"],
];

// small button: [icon, label, has menu, disabled]
const ribbon = [
  { label: "操作", items: [
    { big: ["regen", "重新生成", true] },
    [["copy", "复制", false, true], ["paste", "粘贴", true, true], ["delete", "删除", true, true]],
  ] },
  { label: "获取数据", items: [
    [["udf", "用户定义特征"], ["copyGeo", "复制几何"], ["shrink", "收缩包络"]],
  ] },
  { label: "基准", gap: 10, items: [
    { big: ["plane", "平面"] },
    [["axis", "轴"], ["points", "点", true], ["csys", "坐标系"]],
    { big: ["sketch", "草绘"] },
  ] },
  { label: "形状", gap: 10, items: [
    { big: ["extrude", "拉伸"] },
    [["revolve", "旋转"], ["sweep", "扫描", true], ["sweepBlend", "扫描混合"]],
  ] },
  { label: "工程", items: [
    [["hole", "孔", false, true], ["round", "倒圆角", true], ["chamfer", "倒角", true]],
    [["draft", "拔模", true], ["shell", "壳", false, true], ["rib", "筋", true, true]],
  ] },
  { label: "编辑", pad: 8, items: [
    { big: ["pattern", "阵列", true] },
    [["mirror", "镜像", false, true], ["trim", "修剪", false, true], ["merge", "合并", false, true]],
    [["extend", "延伸", false, true], ["offset", "偏移", false, true], ["intersect", "相交", false, true]],
    [["project", "投影"], ["thicken", "加厚", false, true], ["solidify", "实体化", false, true]],
  ] },
  { label: "曲面", items: [
    { big: ["boundary", "边界混合"] },
    [["fill", "填充"], ["style", "样式"], ["freestyle", "自由式"]],
  ] },
  { label: "模型意图", pad: 5, items: [{ big: ["component", "元件界面"] }] },
];

// tree row: [icon, label, can expand]
const features = [
  ["offsetTree", "偏移 1"],
  ["extrude", "拉伸 2", true],
  ["sketchTree", "草绘 2"],
  ["project", "投影 1", true],
  ["trim", "修剪 1"],
  ["trim", "修剪 2"],
  ["trim", "修剪 3"],
  ["copyTree", "复制 1"],
  ["copyTree", "复制 2"],
  ["sweep", "扫描 2", true],
  ["sweep", "扫描 3", true],
  ["sweep", "扫描 4", true],
  ["merge", "合并 2"],
  ["merge", "合并 3"],
  ["merge", "合并 4"],
  ["extrude", "拉伸 3", true],
  ["merge", "合并 5"],
  ["solidify", "实体化 1"],
  ["solidify", "实体化 2"],
  ["round", "倒圆角 1"],
  ["round", "倒圆角 2"],
  ["copyTree", "复制 3"],
  ["mirror", "镜像 1", true],
  ["solidify", "实体化 3"],
  ["solidify", "实体化 4"],
  ["round", "倒圆角 3"],
  ["shell", "壳 2"],
  ["extrude", "拉伸 4", true],
  ["copyTree", "复制 5"],
  ["extrude", "拉伸 5", true],
];

const viewTools = [
  ["zoomFit", "ZA"],
  ["zoomIn", "ZB"],
  ["zoomOut", "ZC"],
  ["repaint", "ZD"],
  ["shading", "ZE"],
  ["view", "ZF"],
  ["savedView", "ZG"],
  ["viewMgr", "ZH"],
  ["section", "ZI"],
  ["datum", "ZJ"],
  ["annotation", "ZK", true],
  ["spin", "ZL"],
];

function RibbonGroup({ label, items, gap, pad }) {
  return (
    <Group $pad={pad}>
      <GroupBody $gap={gap}>
        {items.map((item, i) =>
          item.big ? (
            <BigButton key={i}>
              <Icon name={item.big[0]} size={30} />
              <span>{item.big[1]}</span>
              {item.big[2] && <Arrow />}
            </BigButton>
          ) : (
            <Column key={i}>
              {item.map(([icon, text, menu, disabled]) => (
                <SmallButton key={text} disabled={disabled}>
                  <Icon name={icon} />
                  {text}
                  {menu && <Arrow $color={disabled && "#b1b4b5"} />}
                </SmallButton>
              ))}
            </Column>
          )
        )}
      </GroupBody>
      <GroupLabel>
        {label}
        <Arrow />
      </GroupLabel>
    </Group>
  );
}

// The part is drawn at three units to the pixel.
function Model() {
  return (
    <Scene viewBox="270 171 1650 834" role="img" aria-label="遥控器-外形图">
      <defs>
        <pattern id="dither" width="2" height="2" patternUnits="userSpaceOnUse">
          <path d="M0 0h1v1H0zM1 1h1v1H1z" fill="#b1ada1" shapeRendering="crispEdges" />
        </pattern>
        <pattern id="ditherDark" width="2" height="2" patternUnits="userSpaceOnUse">
          <path d="M0 0h1v1H0zM1 1h1v1H1z" fill="#5d594c" shapeRendering="crispEdges" />
        </pattern>
        <linearGradient id="cyl" gradientUnits="userSpaceOnUse" x1="430" y1="720" x2="530" y2="658">
          <stop offset="0" stopColor="#7580b8" />
          <stop offset=".4" stopColor="#6670a0" />
          <stop offset=".75" stopColor="#596087" />
          <stop offset="1" stopColor="#7d86c1" />
        </linearGradient>
        <linearGradient id="fillet" gradientUnits="userSpaceOnUse" x1="525" y1="640" x2="560" y2="618">
          <stop offset="0" stopColor="#7d86c1" />
          <stop offset=".5" stopColor="#606894" />
          <stop offset="1" stopColor="#7d86c1" />
        </linearGradient>
        <linearGradient id="fillet2" gradientUnits="userSpaceOnUse" x1="455" y1="820" x2="490" y2="798">
          <stop offset="0" stopColor="#7d86c1" />
          <stop offset=".5" stopColor="#666e9c" />
          <stop offset="1" stopColor="#7d86c1" />
        </linearGradient>
        <linearGradient id="nose" gradientUnits="userSpaceOnUse" x1="450" y1="1190" x2="490" y2="1300">
          <stop offset="0" stopColor="#7f89c6" />
          <stop offset=".45" stopColor="#7780b8" />
          <stop offset="1" stopColor="#555b83" />
        </linearGradient>
        <linearGradient id="cup" x1="0" y1="0" x2="1" y2="0">
          <stop offset="0" stopColor="#5d658e" />
          <stop offset=".5" stopColor="#7d86c1" />
          <stop offset="1" stopColor="#6d76aa" />
        </linearGradient>
      </defs>

      {/* picture plane */}
      <path d="M673.300 604.300L943.300 514.300 915 755 643.300 846z" fill="url(#dither)" />
      <path d="M645 845L915.700 755 915 770 643 860z" fill="url(#ditherDark)" />

      <g transform="translate(630 410) scale(.33333)" strokeLinejoin="round">
        {/* housing */}
        <path d="M600 412L684 399 718 445 712 580 690 720Q692 820 687 905L680 1000Q665 1090 650 1130L634 1200Q634 1245 600 1258L460 1302C400 1310 360 1290 335 1260L305 1200 300 1105z" fill="url(#nose)" />
        <path d="M690 405L718 445 712 580 690 720Q692 820 687 905L680 1000Q665 1090 650 1130L590 1120 645 850z" fill="#6c75a8" />
        <path d="M600 412L684 400Q700 402 693 430L655 720 640 850 588 1102Q580 1142 560 1147L330 1217Q308 1212 308 1195L300 1105 300 900z" fill="#a9b5ff" />
        <path d="M330 1222L560 1152 590 1120" fill="none" stroke="#cbd2ff" strokeWidth="5" />

        {/* extruded keys */}
        <path d="M122 323L350 250 612 677 570 690 594 735Q600 755 577 767L550 775 575 820Q592 855 573 885L555 910 575 948Q584 970 565 982L571 1000Q575 1020 555 1028Q566 1050 557 1065L545 1070Q560 1090 550 1100L500 1117 475 1080 470 1125 420 1143 392 1110 390 1152 350 1168 85 745 78 732 95 718 82 690 95 672 78 655 98 630 82 610 90 598 140 580 120 550 103 520 103 490 130 445 152 450 115 390 142 367z" fill="#7d86c1" />
        <path d="M325 400L575 820Q592 855 573 885L555 910 420 700 310 510 285 485 275 470z" fill="url(#cyl)" />
        <path d="M335 315L594 735Q600 755 577 767L315 342z" fill="url(#fillet)" />
        <path d="M305 590L575 948Q584 970 565 982L290 620z" fill="url(#fillet2)" opacity=".7" />
        <path d="M300 640L571 1000Q575 1020 555 1028L300 665z" fill="#6d76aa" opacity=".5" />
        <path d="M135 710L160 740 392 1130 390 1152zM215 695L240 710 478 1100 475 1125z" fill="#595f88" />

        {/* open box */}
        <path d="M145 116L373 40 350 250 245 283z" fill="#7d86c1" />
        <path d="M145 116L245 283 122 323z" fill="#595f88" />
        <path d="M373 40L635 465 612 677 350 250z" fill="#595f88" />

        {/* round key */}
        <path d="M155 435C170 410 260 370 290 380 320 395 330 430 322 450 315 475 300 485 270 480L240 500 160 520 130 550C95 530 95 480 130 447z" fill="url(#cup)" />
        <path d="M175 435C205 415 245 405 265 410 290 430 285 465 270 480L250 490 215 515z" fill="#757eb6" />
        <path d="M152 458C140 475 140 500 152 520L205 515 160 435z" fill="#666e9c" />
        <path d="M180 568L212 632 205 655 178 612zM218 555L228 553 228 572 218 580zM135 670L160 702V730L137 695zM218 640L243 672V700L220 658z" fill="#545a80" />

        <g fill="none" stroke="#101118" strokeWidth="3" shapeRendering="crispEdges">
          <path d="M122 323L145 116 373 40 635 465M373 40L350 250 122 323 142 365M350 250L612 677M145 116L245 283M603 412L684 399 697 408 718 445 712 520M615 437L690 415" />
          <path d="M697 412L663 690 645 850M688 412L652 720 640 850M648 850L590 1120 580 1138 560 1148 330 1220 308 1205 304 1190 302 1105M640 850L585 1102" />
          <path d="M142 367L320 307 335 310 333 325 315 340 135 398M142 365C110 378 112 398 130 398L170 455M155 395L142 367M313 340L577 767" />
          <path d="M155 425C190 400 240 380 290 380M165 435C205 412 250 405 265 412M290 380L260 408 270 418 303 390M303 390C335 410 330 450 297 485L270 478M265 412C290 430 290 455 270 478" />
          <path d="M155 425L215 515M165 435L205 517M152 458C140 475 138 500 155 520M130 447L160 460M130 447C95 480 95 530 128 550M120 543L160 515M160 520L128 550 140 580M158 520C190 525 230 510 252 490L270 505C235 535 180 550 140 550M175 550L180 525M252 490L275 500 280 510 262 510M268 478L305 525M297 485L320 528" />
          <path d="M90 598L180 568 212 632M90 598C78 612 85 620 97 620L175 595M97 620L90 637 170 612M90 637C75 650 75 662 92 667L175 645M92 667L85 685 95 692M85 685C80 700 90 713 97 713L130 702M218 555L310 527C325 540 315 550 308 550L222 577 218 580V555M310 556L308 570C318 580 312 595 302 597L215 620V600L302 572M245 630L295 613C305 625 295 637 288 637L245 650V630M250 650L290 640 292 660 240 675M240 690L290 675C298 660 292 655 290 650" />
          <path d="M165 650L215 635 243 672V700M165 650L163 672 218 655M95 692L135 670 160 703V730M80 735C75 720 90 710 130 700L160 740M85 745L135 725M163 702L218 685 240 710M163 720L215 700M180 568V612L205 655M212 632L218 655" />
          <path d="M85 745L352 1168M105 735L130 725M135 712L390 1148M160 725L400 1115M167 722L417 1143M215 700L475 1125M235 710L498 1115M243 690L540 1100M290 670L553 1065M300 600L557 1030M300 535L555 910" />
          <path d="M308 1190L590 1102M445 1138L443 1185 465 1220 485 1252 520 1285M308 1205L335 1260 560 1190 615 1150M320 1230L565 1160M335 1260C350 1290 400 1310 455 1304L600 1258 632 1215 630 1180 590 1120M560 1148L575 1175 600 1225 602 1256M648 850L680 885" />
          <path d="M718 445L690 720 650 930 625 1130" strokeDasharray="3 6" />
        </g>
      </g>

      {/* plane in front of the housing */}
      <path d="M862 545L880 545 858 740 838 780 832 770z" fill="url(#dither)" opacity=".55" />
      <path d="M735 820L836 786 832 794 740 825zM836 781L846 778 846 793 834 797z" fill="url(#ditherDark)" />
      <path d="M700 829L734 817 738 831 695 843z" fill="#2c2d2c" opacity=".3" />
    </Scene>
  );
}

export default function App() {
  return (
    <Window>
      <GlobalStyle />
      <TitleBar>
        <Quick>
          <Brand>
            <Icon name="cube" />
            creo°
          </Brand>
          {quick.map(([icon, tip, menu, off]) => (
            <QuickButton key={tip} $wide={menu} disabled={off}>
              <Icon name={icon} />
              {menu && <Arrow $color={off && "#a2a7a7"} />}
              <KeyTip $off={off}>{tip}</KeyTip>
            </QuickButton>
          ))}
          <Customize aria-label="自定义">
            <Icon name="custom" />
          </Customize>
        </Quick>
        <Title>遥控器-外形图 (活动的) - Creo Parametric 6.0</Title>
        <WindowButtons>
          {["min", "restore", "x"].map((name) => (
            <WindowButton key={name} aria-label={name}>
              <Icon name={name} size={14} />
            </WindowButton>
          ))}
        </WindowButtons>
      </TitleBar>

      <TabBar>
        <FileTab>
          文件
          <KeyTip $drop={-11}>F</KeyTip>
        </FileTab>
        {tabs.map(([label, tip], i) => (
          <Tab key={tip} $active={i === 0}>
            {label}
            <KeyTip $drop={-10}>{tip}</KeyTip>
          </Tab>
        ))}
        <TabTools>
          <TabTool aria-label="最小化功能区"><Icon name="up" /></TabTool>
          <TabTool aria-label="搜索"><Icon name="search" size={14} /></TabTool>
          <TabTool aria-label="学习"><Icon name="cap" size={14} /></TabTool>
          <Arrow $color="#fff" />
          <TabTool aria-label="帮助"><Icon name="help" size={14} /></TabTool>
        </TabTools>
      </TabBar>

      <Ribbon>
        {ribbon.map((group) => (
          <RibbonGroup key={group.label} {...group} />
        ))}
      </Ribbon>

      <Work>
        <Side>
          <SideTabs>
            <SideTab $active $pad={9}>
              <Icon name="tree" />
              模型树
            </SideTab>
            <SideTab $gap={4}>
              <Icon name="folders" size={19} />
              文件夹浏览器
            </SideTab>
            <SideTab>
              <Icon name="favorite" size={17} />
              收藏夹
            </SideTab>
          </SideTabs>
          <TreeHead>
            <h2>模型树</h2>
            <HeadButton aria-label="设置"><Icon name="tools" size={18} /><Arrow /></HeadButton>
            <HeadButton aria-label="显示"><Icon name="list" size={18} /><Arrow /></HeadButton>
            <HeadButton aria-label="隐藏树"><Icon name="hideTree" size={20} /></HeadButton>
          </TreeHead>
          <Filter>
            <Icon name="funnel" />
            <SearchBox>
              <input type="text" aria-label="过滤" />
              <PlainButton aria-label="清除"><Icon name="clear" size={12} /></PlainButton>
            </SearchBox>
            <PlainButton aria-label="过滤选项"><Arrow /></PlainButton>
            <AddButton aria-label="添加"><Icon name="plus" size={14} /></AddButton>
          </Filter>
          <TreeArea>
            <TreePane>
              <Tree>
                {features.map(([icon, label, open]) => (
                  <TreeItem key={label}>
                    <Twist $open={open} disabled={!open} aria-label="展开" />
                    <Icon name={icon} />
                    {label}
                  </TreeItem>
                ))}
              </Tree>
              <InsertLine />
            </TreePane>
            <ScrollBar>
              <ScrollButton $up aria-label="向上"><Arrow /></ScrollButton>
              <Track><Thumb /></Track>
              <ScrollButton aria-label="向下"><Arrow /></ScrollButton>
            </ScrollBar>
          </TreeArea>
        </Side>
        <Canvas>
          <Model />
          <ViewBar>
            {viewTools.map(([icon, tip, on]) => (
              <ViewButton key={tip} $on={on}>
                <Icon name={icon} />
                <KeyTip $drop={-10}>{tip}</KeyTip>
              </ViewButton>
            ))}
          </ViewBar>
        </Canvas>
      </Work>

      <Status>
        <StatusButton $on aria-label="导航器"><Icon name="tree" /></StatusButton>
        <StatusButton aria-label="浏览器"><Icon name="globe" /></StatusButton>
        <StatusButton aria-label="全屏"><Icon name="square" /></StatusButton>
        <Message>遥控器-外形图 已保存。</Message>
        <StatusCell $empty />
        <StatusCell>
          <FindButton aria-label="查找"><Icon name="binoculars" /></FindButton>
          <FindButton $narrow aria-label="查找选项"><Arrow /></FindButton>
        </StatusCell>
        <StatusCell />
        <SelectWrap>
          <select aria-label="选择过滤器" defaultValue="几何">
            <option>几何</option>
          </select>
          <Arrow />
        </SelectWrap>
      </Status>
      <TaskBar>
        <TaskSlot />
        <Meters>
          <Meter $color="#f2b8a8">4.300%</Meter>
          <Meter $color="#f5e02c">2015</Meter>
          <Meter $color="#8fd62f">22%</Meter>
        </Meters>
        <Clock>11:00:50 星期六</Clock>
        <ShowDesktop />
      </TaskBar>
    </Window>
  );
}
